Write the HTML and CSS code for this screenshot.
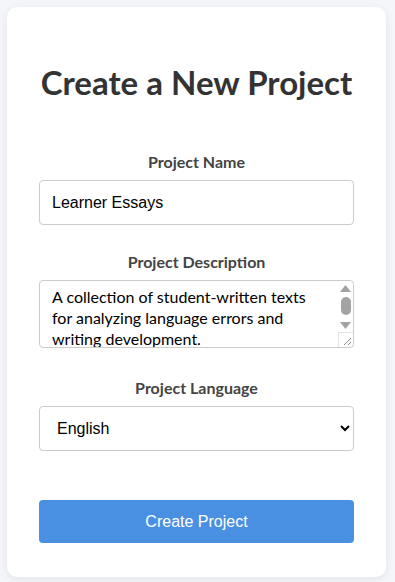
FILE: index.html
```html
<!DOCTYPE html>
<html lang="en">
<head>
    <meta charset="UTF-8">
    <meta name="viewport" content="width=device-width, initial-scale=1.0">
    <title>Create a New Project</title>
    <link rel="stylesheet" href="styles.css">
</head>
<body>
<div class="container">
    <div class="card">
        <h1>Create a New Project</h1>

        <form class="project-form">
            <div class="form-group">
                <label for="projectName">Project Name</label>
                <input type="text" id="projectName" value="Learner Essays">
            </div>

            <div class="form-group form-group-description">
                <label for="projectDescription">Project Description</label>
                <div class="textarea-wrap">
                    <textarea id="projectDescription">A collection of student-written texts for analyzing language errors and writing development.</textarea>
                    <!-- desktop style scrollbar drawn over the textarea -->
                    <div class="fake-scrollbar" aria-hidden="true">
                        <svg class="arrow" width="11" height="7" viewBox="0 0 11 7"><path d="M5.5 0L11 7H0z"/></svg>
                        <span class="thumb"></span>
                        <svg class="arrow" width="11" height="7" viewBox="0 0 11 7"><path d="M0 0h11L5.5 7z"/></svg>
                        <span class="corner">
                            <svg width="13" height="13" viewBox="0 0 13 13"><path d="M12 5L5 12M12 9L9 12"/></svg>
                        </span>
                    </div>
                </div>
            </div>

            <div class="form-group">
                <label for="projectLanguage">Project Language</label>
                <select id="projectLanguage">
                    <option selected>English</option>
                    <option>Spanish</option>
                    <option>French</option>
                    <option>German</option>
                </select>
            </div>

            <button type="submit" class="create-button">Create Project</button>
        </form>
    </div>
</div>
</body>
</html>
```

FILE: styles.css
```css
* {
    box-sizing: border-box;
}

body {
    font-family: Lato, 'Noto Sans', sans-serif;
    background-color: #f5f6fa;
    margin: 0;
    padding: 7px 9px 7px 7px;
    color: #333;
}

.card {
    background-color: #fff;
    border-radius: 10px;
    box-shadow: 0 2px 10px rgba(0, 0, 0, 0.08);
    padding: 40px 32px 34px;
}

.card h1 {
    text-align: center;
    font-size: 33px;
    font-weight: 700;
    line-height: 38px;
    color: #333;
    margin: 16px 0 52px;
}

.form-group {
    margin-bottom: 28px;
}

.form-group-description {
    margin-bottom: 31px;
}

label {
    display: block;
    text-align: center;
    font-weight: 700;
    font-size: 16px;
    line-height: 18px;
    color: #444;
    margin-bottom: 9px;
}

input, textarea, select {
    display: block;
    width: 100%;
    font-size: 16px;
    border: 1px solid #ccc;
    border-radius: 4px;
    background: #fff;
    color: #000;
}

input, select {
    font-family: 'Liberation Sans', Arial, sans-serif;
    height: 45px;
    padding: 0 12px;
}

select {
    padding-left: 13px;
}

.textarea-wrap {
    position: relative;
}

textarea {
    font-family: inherit;
    height: 68px;
    padding: 5px 27px 12px 12px;
    resize: none;
    line-height: 21px;
    overflow: hidden;
}

.fake-scrollbar {
    position: absolute;
    top: 1px;
    right: 1px;
    bottom: 1px;
    width: 15px;
    display: flex;
    flex-direction: column;
    align-items: center;
    padding-top: 4px;
    pointer-events: none;
}

.fake-scrollbar .arrow {
    display: block;
    fill: #a3a3a3;
}

.fake-scrollbar .thumb {
    width: 10px;
    height: 18px;
    margin: 5px 0 7px;
    border-radius: 5px;
    background-color: #a3a3a3;
}

.fake-scrollbar .corner {
    margin-top: auto;
    width: 15px;
    height: 15px;
    border-top: 1px solid #e3e3e3;
    border-left: 1px solid #e3e3e3;
    border-bottom-right-radius: 3px;
}

.fake-scrollbar .corner svg {
    display: block;
    stroke: #8a8a8a;
    stroke-width: 1;
}

.create-button {
    width: 100%;
    height: 43px;
    margin-top: 21px;
    border: none;
    border-radius: 4px;
    background-color: #4a90e2;
    color: #fff;
    font-family: 'Liberation Sans', Arial, sans-serif;
    font-size: 16px;
    cursor: pointer;
}
```
